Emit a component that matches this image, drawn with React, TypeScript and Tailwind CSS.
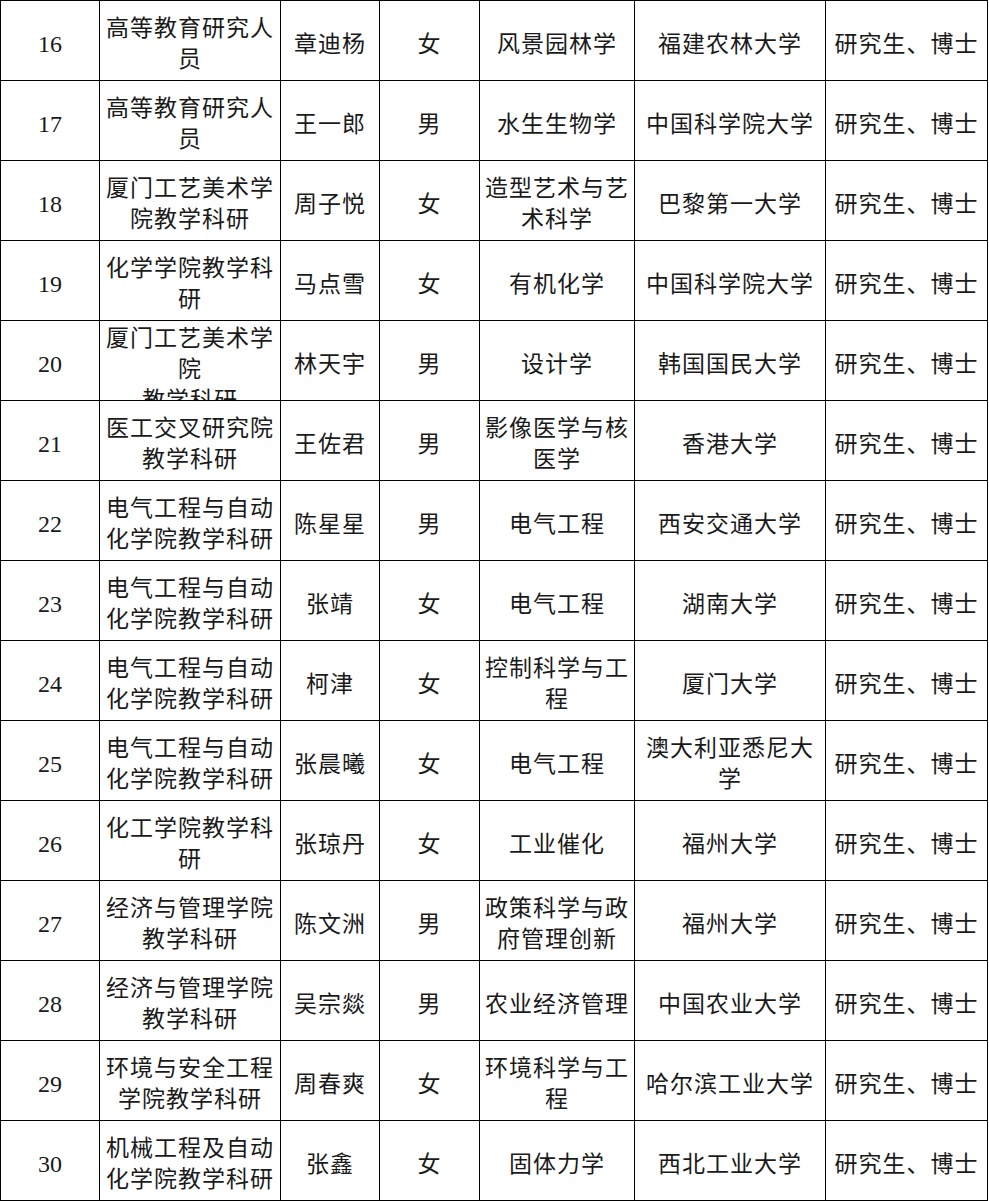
type Row = {
    no: string;
    dept: string[];
    name: string;
    sex: string;
    major: string[];
    school: string[];
    degree: string;
    deptTop?: boolean;
};

const rows: Row[] = [
    { no: "16", dept: ["高等教育研究人", "员"], name: "章迪杨", sex: "女", major: ["风景园林学"], school: ["福建农林大学"], degree: "研究生、博士" },
    { no: "17", dept: ["高等教育研究人", "员"], name: "王一郎", sex: "男", major: ["水生生物学"], school: ["中国科学院大学"], degree: "研究生、博士" },
    { no: "18", dept: ["厦门工艺美术学", "院教学科研"], name: "周子悦", sex: "女", major: ["造型艺术与艺", "术科学"], school: ["巴黎第一大学"], degree: "研究生、博士" },
    { no: "19", dept: ["化学学院教学科", "研"], name: "马点雪", sex: "女", major: ["有机化学"], school: ["中国科学院大学"], degree: "研究生、博士" },
    { no: "20", dept: ["厦门工艺美术学", "院", "教学科研"], name: "林天宇", sex: "男", major: ["设计学"], school: ["韩国国民大学"], degree: "研究生、博士", deptTop: true },
    { no: "21", dept: ["医工交叉研究院", "教学科研"], name: "王佐君", sex: "男", major: ["影像医学与核", "医学"], school: ["香港大学"], degree: "研究生、博士" },
    { no: "22", dept: ["电气工程与自动", "化学院教学科研"], name: "陈星星", sex: "男", major: ["电气工程"], school: ["西安交通大学"], degree: "研究生、博士" },
    { no: "23", dept: ["电气工程与自动", "化学院教学科研"], name: "张靖", sex: "女", major: ["电气工程"], school: ["湖南大学"], degree: "研究生、博士" },
    { no: "24", dept: ["电气工程与自动", "化学院教学科研"], name: "柯津", sex: "女", major: ["控制科学与工", "程"], school: ["厦门大学"], degree: "研究生、博士" },
    { no: "25", dept: ["电气工程与自动", "化学院教学科研"], name: "张晨曦", sex: "女", major: ["电气工程"], school: ["澳大利亚悉尼大", "学"], degree: "研究生、博士" },
    { no: "26", dept: ["化工学院教学科", "研"], name: "张琼丹", sex: "女", major: ["工业催化"], school: ["福州大学"], degree: "研究生、博士" },
    { no: "27", dept: ["经济与管理学院", "教学科研"], name: "陈文洲", sex: "男", major: ["政策科学与政", "府管理创新"], school: ["福州大学"], degree: "研究生、博士" },
    { no: "28", dept: ["经济与管理学院", "教学科研"], name: "吴宗燚", sex: "男", major: ["农业经济管理"], school: ["中国农业大学"], degree: "研究生、博士" },
    { no: "29", dept: ["环境与安全工程", "学院教学科研"], name: "周春爽", sex: "女", major: ["环境科学与工", "程"], school: ["哈尔滨工业大学"], degree: "研究生、博士" },
    { no: "30", dept: ["机械工程及自动", "化学院教学科研"], name: "张鑫", sex: "女", major: ["固体力学"], school: ["西北工业大学"], degree: "研究生、博士" }
];

function Cell({ lines, top }: { lines: string[]; top?: boolean }) {
    return (
        <div
            className={
                top
                    ? "flex h-[80px] flex-col items-center justify-start overflow-hidden border-b border-r border-black"
                    : "flex h-[80px] flex-col items-center justify-center overflow-hidden border-b border-r border-black pt-[3px]"
            }
        >
            {lines.map((line, i) => (
                <div key={i} className="whitespace-nowrap text-center leading-[31px] tracking-[1px]">
                    {line}
                </div>
            ))}
        </div>
    );
}

export default function App() {
    return (
        <div className="min-h-[1201px] w-[989px] overflow-hidden bg-white">
            <div
                className="grid w-[988px] grid-cols-[99px_181px_99px_100px_155px_191px_162px] border-l border-t border-black text-[23px] text-[#1a1a1a]"
                style={{ fontFamily: '"Noto Sans CJK SC", "Noto Sans", sans-serif' }}
            >
                {rows.map((r) => (
                    <div key={r.no} className="contents">
                        <div className="flex h-[80px] items-center justify-center border-b border-r border-black pt-[7px] font-['Liberation_Serif',serif] text-[24px] leading-[31px]">
                            {r.no}
                        </div>
                        <Cell lines={r.dept} top={r.deptTop} />
                        <Cell lines={[r.name]} />
                        <Cell lines={[r.sex]} />
                        <Cell lines={r.major} />
                        <Cell lines={r.school} />
                        <Cell lines={[r.degree]} />
                    </div>
                ))}
            </div>
        </div>
    );
}
